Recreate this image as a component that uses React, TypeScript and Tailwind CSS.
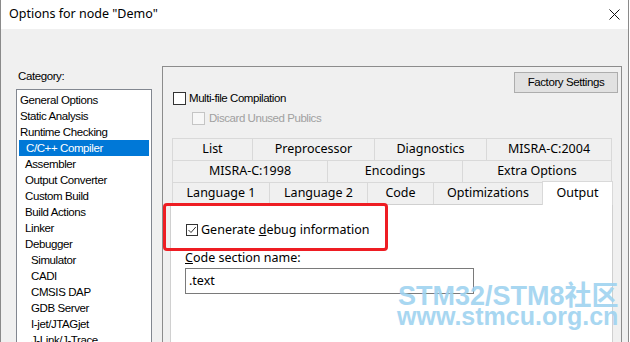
import React from 'react';

const classic = { fontFamily: '"Liberation Sans", Arial, sans-serif' };
const ui = { fontFamily: '"Noto Sans", "Open Sans", sans-serif' };

const categories: { label: string; level: number; selected?: boolean }[] = [
  { label: 'General Options', level: 0 },
  { label: 'Static Analysis', level: 0 },
  { label: 'Runtime Checking', level: 0 },
  { label: 'C/C++ Compiler', level: 1, selected: true },
  { label: 'Assembler', level: 1 },
  { label: 'Output Converter', level: 1 },
  { label: 'Custom Build', level: 1 },
  { label: 'Build Actions', level: 1 },
  { label: 'Linker', level: 1 },
  { label: 'Debugger', level: 1 },
  { label: 'Simulator', level: 2 },
  { label: 'CADI', level: 2 },
  { label: 'CMSIS DAP', level: 2 },
  { label: 'GDB Server', level: 2 },
  { label: 'I-jet/JTAGjet', level: 2 },
  { label: 'J-Link/J-Trace', level: 2 },
];

const tabRow1 = [
  { label: 'List', w: 'w-[80px]' },
  { label: 'Preprocessor', w: 'w-[122px]' },
  { label: 'Diagnostics', w: 'w-[112px]' },
  { label: 'MISRA-C:2004', w: 'w-[126px]' },
];
const tabRow2 = [
  { label: 'MISRA-C:1998', w: 'w-[155px]' },
  { label: 'Encodings', w: 'w-[135px]' },
  { label: 'Extra Options', w: 'w-[150px]' },
];
const tabRow3 = [
  { label: 'Language 1', w: 'w-[97px]' },
  { label: 'Language 2', w: 'w-[98px]' },
  { label: 'Code', w: 'w-[66px]' },
  { label: 'Optimizations', w: 'w-[109px]' },
];

function TabRow({ tabs }: { tabs: { label: string; w: string }[] }) {
  return (
    <div className="flex h-[22px]">
      {tabs.map((t, i) => (
        <div
          key={t.label}
          className={`${t.w} h-[22px] flex items-center justify-center border-t border-l border-[#d9d9d9] bg-[#f0f0f0] text-[12.5px] text-black ${
            i === tabs.length - 1 ? 'border-r' : ''
          }`}
          style={ui}
        >
          {t.label}
        </div>
      ))}
    </div>
  );
}

export default function App() {
  return (
    <div className="w-[630px] h-[342px] overflow-hidden bg-white relative">
      <div className="w-[629px] h-[342px] border-l border-r border-[#8a8a8a] flex flex-col bg-[#f0f0f0]">
        {/* title bar */}
        <div className="h-[29px] bg-white flex items-center justify-between pl-[8px] pr-[8px] shrink-0">
          <span className="text-[12.5px] text-black" style={ui}>
            Options for node "Demo"
          </span>
          <svg width="11" height="11" viewBox="0 0 11 11">
            <path d="M0.5 0.5 L10.5 10.5 M10.5 0.5 L0.5 10.5" stroke="#111" strokeWidth="1" />
          </svg>
        </div>

        <div className="flex flex-1 min-h-0">
          {/* category list */}
          <div className="pl-[15px] w-[160px] shrink-0">
            <div className="mt-[40px] h-[14px] leading-[14px] pl-[2px] text-[11.5px] tracking-[-0.4px] text-black" style={classic}>
              Category:
            </div>
            <div className="mt-[6px] w-[136px] h-[300px] border border-[#828790] bg-white pt-[2px] px-[1px]">
              {categories.map((c) => (
                <div
                  key={c.label}
                  className={`h-[16px] leading-[16px] text-[11.5px] tracking-[-0.4px] whitespace-nowrap ${
                    c.selected ? 'bg-[#0078d7] text-white mx-[1px]' : 'text-black'
                  } ${c.level === 0 ? 'pl-[2px]' : c.level === 1 ? 'pl-[7px]' : 'pl-[13px]'}`}
                  style={classic}
                >
                  {c.label}
                </div>
              ))}
            </div>
          </div>

          {/* options group */}
          <div className="mt-[37px] ml-[1px] w-[460px] h-[320px] border border-[#8c8c8c] flex flex-col">
            <div className="flex items-start justify-between pr-[3px]">
              <div className="pl-[10px] pt-[25px] flex flex-col text-[11.5px] tracking-[-0.45px]" style={classic}>
                <div className="flex items-center h-[13px]">
                  <div className="w-[13px] h-[13px] border border-[#333] bg-white" />
                  <span className="ml-[3px] text-black">Multi-file Compilation</span>
                </div>
                <div className="flex items-center h-[13px] mt-[7px] ml-[19px]">
                  <div className="w-[13px] h-[13px] border border-[#c5c5c5] bg-[#f7f7f7]" />
                  <span className="ml-[4px] text-[#a0a0a0]">Discard Unused Publics</span>
                </div>
              </div>
              <button
                className="mt-[5px] w-[104px] h-[21px] bg-[#e1e1e1] border border-[#adadad] text-[11.5px] tracking-[-0.4px] text-black"
                style={classic}
              >
                Factory Settings
              </button>
            </div>

            {/* tabs */}
            <div className="mt-[13px] ml-[9px]">
              <TabRow tabs={tabRow1} />
              <TabRow tabs={tabRow2} />
              <div className="flex h-[22px] items-end">
                {tabRow3.map((t) => (
                  <div
                    key={t.label}
                    className={`${t.w} h-[22px] flex items-center justify-center border-t border-l border-[#d9d9d9] bg-[#f0f0f0] text-[12.5px] text-black`}
                    style={ui}
                  >
                    {t.label}
                  </div>
                ))}
                <div
                  className="w-[71px] h-[24px] -mb-[1px] relative z-10 flex items-start pt-[2px] justify-center border-t border-l border-r border-[#d9d9d9] bg-white text-[12.5px] text-black"
                  style={ui}
                >
                  Output
                </div>
              </div>
            </div>

            {/* tab page */}
            <div className="ml-[7px] w-[443px] flex-1 bg-white border-t border-l border-r border-[#d0d0d0] pl-[14px] pt-[19px]" style={ui}>
              <div className="flex items-center h-[12px] ml-[1px]">
                <div className="w-[12px] h-[12px] border border-[#333] bg-white flex items-center justify-center">
                  <svg width="10" height="10" viewBox="0 0 10 10">
                    <path d="M1.5 5 L4 7.5 L8.8 2" stroke="#333" strokeWidth="1" fill="none" />
                  </svg>
                </div>
                <span className="ml-[3px] text-[12.5px] text-black leading-[16px]">
                  Generate <span className="underline">d</span>ebug information
                </span>
              </div>
              <div className="mt-[14px] h-[16px] leading-[16px] text-[12.5px] text-black">
                <span className="underline">C</span>ode section name:
              </div>
              <div className="mt-[2px] w-[289px] h-[26px] border border-[#7a7a7a] bg-white pl-[3px] flex items-center text-[12.5px] text-black">
                .text
              </div>
            </div>
          </div>
        </div>
      </div>

      {/* red highlight */}
      <div className="absolute left-[163px] top-[203px] w-[225px] h-[48px] border-[3px] border-[#ee1d23] rounded-[4px] pointer-events-none" />

      {/* watermark */}
      <div
        className="absolute left-[398px] top-[283px] text-[27px] leading-[27px] font-bold text-[#9fd3f0] opacity-90 whitespace-nowrap pointer-events-none"
        style={{ fontFamily: '"Liberation Sans", "Noto Sans CJK SC", sans-serif' }}
      >
        STM32/STM8社区
      </div>
      <div
        className="absolute left-[397px] top-[304px] text-[25px] leading-[25px] font-bold text-[#9fd3f0] opacity-90 whitespace-nowrap pointer-events-none"
        style={{ fontFamily: '"Liberation Sans", sans-serif' }}
      >
        www.stmcu.org.cn
      </div>
    </div>
  );
}
